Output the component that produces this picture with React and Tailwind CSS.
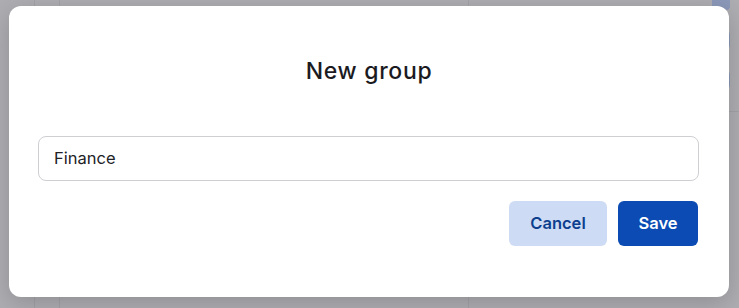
export default function App() {
  return (
    <div className="relative h-[308px] w-[739px] overflow-hidden bg-[#aeadb2]">
      {/* dimmed page beneath the dialog */}
      <div className="flex h-full w-full">
        <div className="h-full w-[35px] border-r border-[#a3a2a7]" />
        <div className="h-full w-[25px] border-r border-[#a3a2a7]" />
        <div className="h-full w-[409px] border-r border-[#a3a2a7]" />
        <div className="h-full flex-1" />
        <div className="flex h-full w-[79px] flex-col">
          <div className="flex h-[112px] flex-col items-end gap-[20px] border-b border-[#a3a2a7] pr-[9px]">
            <div className="mt-[-8px] h-[18px] w-[18px] rounded-[4px] bg-[#8b98b8]" />
            <div className="h-[20px] w-[20px] rounded-[5px] bg-[#8b98b8]" />
            <div className="h-[20px] w-[20px] rounded-[5px] bg-[#8b98b8]" />
          </div>
        </div>
      </div>

      {/* dialog overlay */}
      <div className="absolute inset-0 pl-[9px] pt-[6px]">
        <div className="flex h-[291px] w-[720px] flex-col rounded-[12px] bg-white px-[29px] pt-[50px] shadow-[0_6px_24px_rgba(0,0,0,0.18)]">
          <h2 className="h-[30px] text-center font-['Inter',sans-serif] text-[23px] font-medium leading-[30px] tracking-[0.7px] text-[#1b1b1f]">
            New group
          </h2>
          <div className="mt-[50px] flex h-[45px] w-[661px] items-center rounded-[8px] border border-[#cfcfd3] px-[15px] font-['Inter',sans-serif] text-[16.5px] text-[#222226]">
            Finance
          </div>
          <div className="mt-[20px] flex w-[661px] justify-end gap-[11px] pr-px">
            <button className="flex h-[45px] w-[98px] items-center justify-center rounded-[6px] bg-[#cddcf4] font-['Inter',sans-serif] text-[16.5px] font-semibold text-[#0d3f8f]">
              Cancel
            </button>
            <button className="flex h-[45px] w-[80px] items-center justify-center rounded-[6px] bg-[#0b4bb3] font-['Inter',sans-serif] text-[16.5px] font-semibold text-white">
              Save
            </button>
          </div>
        </div>
      </div>
    </div>
  );
}
